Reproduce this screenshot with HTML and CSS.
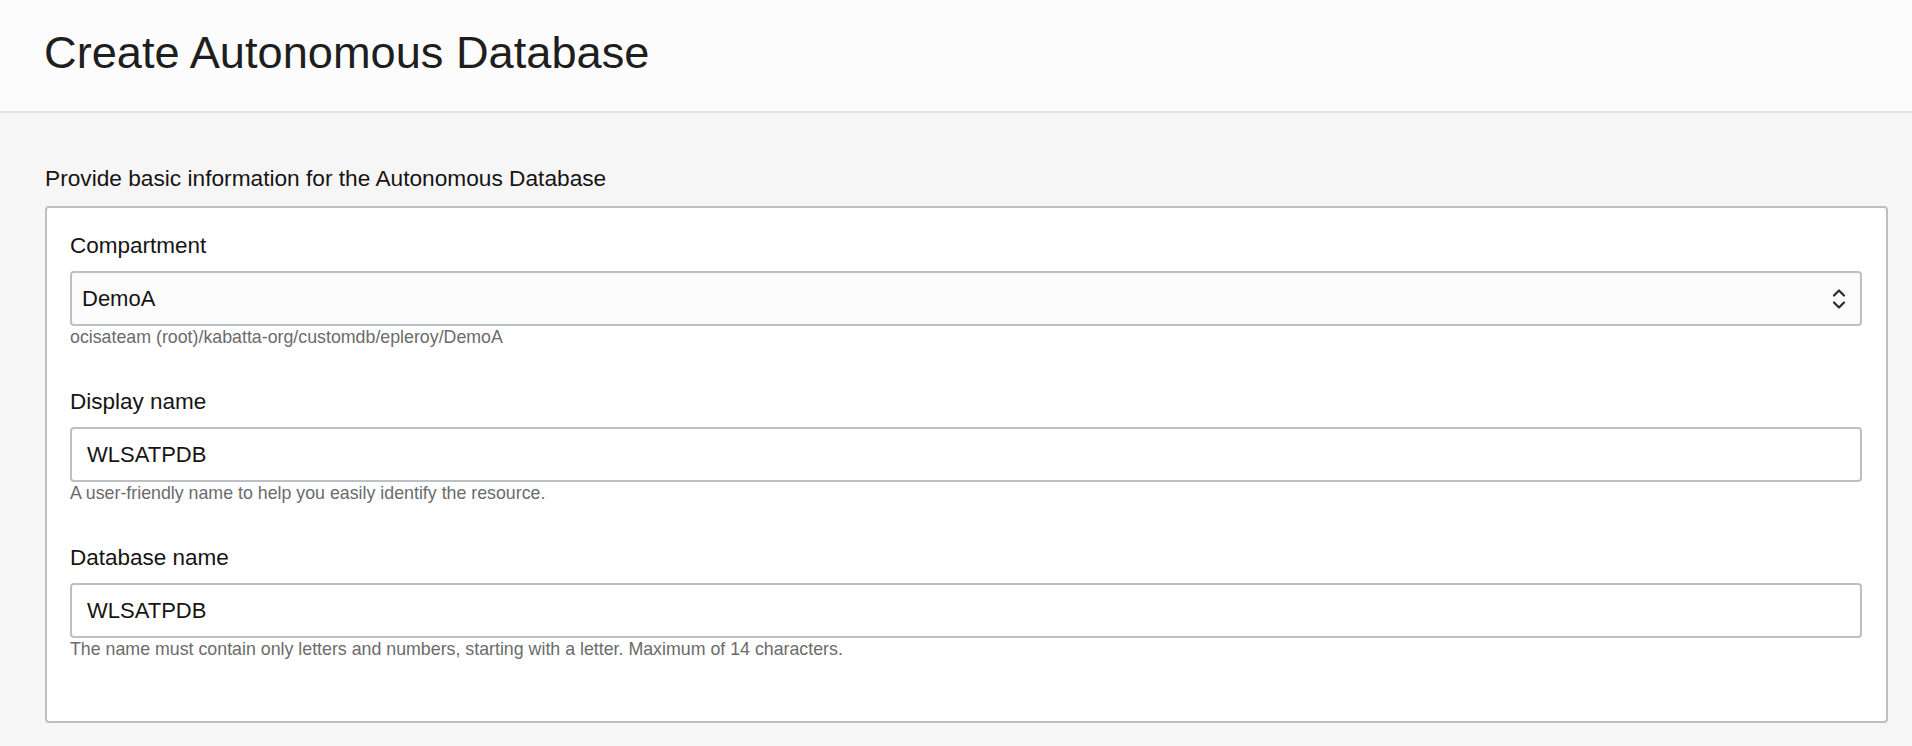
FILE: index.html
```html
<!DOCTYPE html>
<html lang="en">
<head>
<meta charset="utf-8">
<title>Create Autonomous Database</title>
<link rel="stylesheet" href="styles.css">
</head>
<body>
<header class="page-header">
  <h1 class="page-title">Create Autonomous Database</h1>
</header>
<main class="page-body">
  <h2 class="section-title">Provide basic information for the Autonomous Database</h2>
  <section class="card">
    <div class="field">
      <label class="field-label">Compartment</label>
      <div class="select">
        <span class="select-value">DemoA</span>
        <svg class="select-icon" width="14" height="22" viewBox="0 0 14 22" aria-hidden="true">
          <path d="M2 7.5 L7 2.5 L12 7.5" fill="none" stroke="#2b2b2b" stroke-width="2.2" stroke-linecap="round" stroke-linejoin="round"/>
          <path d="M2 14.5 L7 19.5 L12 14.5" fill="none" stroke="#2b2b2b" stroke-width="2.2" stroke-linecap="round" stroke-linejoin="round"/>
        </svg>
      </div>
      <div class="field-help">ocisateam (root)/kabatta-org/customdb/epleroy/DemoA</div>
    </div>
    <div class="field">
      <label class="field-label">Display name</label>
      <input class="text-input" type="text" value="WLSATPDB">
      <div class="field-help">A user-friendly name to help you easily identify the resource.</div>
    </div>
    <div class="field">
      <label class="field-label">Database name</label>
      <input class="text-input" type="text" value="WLSATPDB">
      <div class="field-help">The name must contain only letters and numbers, starting with a letter. Maximum of 14 characters.</div>
    </div>
  </section>
</main>
</body>
</html>
```

FILE: styles.css
```css
* {
  box-sizing: border-box;
}

html, body {
  margin: 0;
  padding: 0;
}

body {
  background: #f6f6f6;
  color: #161513;
  font-family: "Liberation Sans", Arial, Helvetica, sans-serif;
}

.page-header {
  background: #fcfcfc;
  border-bottom: 2px solid #e4e4e4;
  height: 113px;
  padding: 0 24px 0 44px;
  display: flex;
  align-items: flex-start;
}

.page-title {
  margin: 0;
  padding-top: 25px;
  font-size: 45.2px;
  font-weight: 400;
  line-height: 56px;
  color: #1e1e1e;
}

.page-body {
  padding: 52px 24px 40px 45px;
}

.section-title {
  margin: 0 0 14px 0;
  font-size: 22.7px;
  font-weight: 400;
  line-height: 27px;
  color: #161513;
}

.card {
  background: #ffffff;
  border: 2px solid #bcc0c5;
  border-radius: 4px;
  padding: 24px 24px 61px 23px;
  display: flex;
  flex-direction: column;
  gap: 40px;
}

.field {
  display: flex;
  flex-direction: column;
}

.field-label {
  font-size: 22.5px;
  line-height: 27px;
  color: #161513;
  margin-bottom: 12px;
}

.select {
  height: 55px;
  border: 2px solid #bcc0c5;
  border-radius: 4px;
  background: #fbfbfb;
  display: flex;
  align-items: center;
  justify-content: space-between;
  padding: 0 14px 0 10px;
}

.select-value {
  font-size: 22px;
  color: #161513;
}

.select-icon {
  display: block;
}

.text-input {
  height: 55px;
  width: 100%;
  border: 2px solid #bcc0c5;
  border-radius: 4px;
  background: #ffffff;
  padding: 0 16px 0 15px;
  margin: 0;
  font-family: "Liberation Sans", Arial, Helvetica, sans-serif;
  font-size: 22px;
  color: #161513;
  outline: none;
}

.field-help {
  font-size: 17.8px;
  line-height: 22px;
  color: #6b6b6b;
}
```
